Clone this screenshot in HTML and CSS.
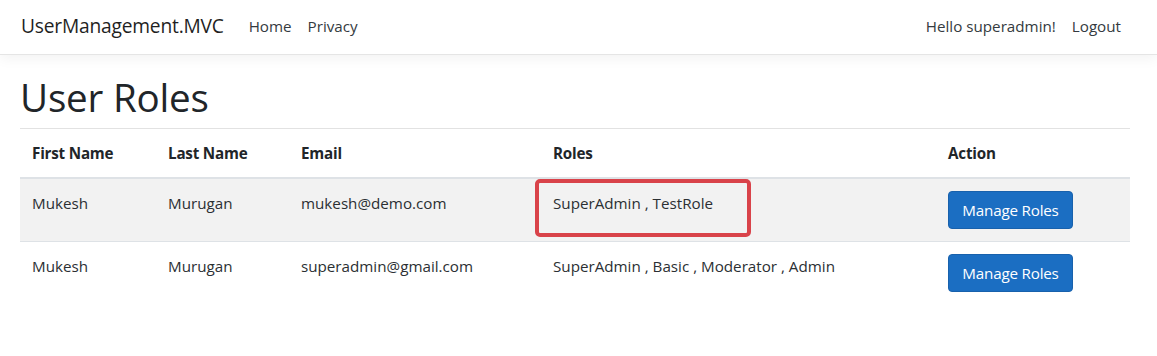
FILE: index.html
```html
<!DOCTYPE html>
<html>
<head>
<meta charset="utf-8">
<link rel="stylesheet" href="styles.css">
</head>
<body>
<header class="navbar">
  <div class="nav-left">
    <span class="brand">UserManagement.MVC</span>
    <a class="nav-link">Home</a>
    <a class="nav-link">Privacy</a>
  </div>
  <div class="nav-right">
    <a class="nav-link">Hello superadmin!</a>
    <a class="nav-link">Logout</a>
  </div>
</header>
<main class="content">
  <h1 class="title">User Roles</h1>
  <table class="table">
    <thead>
      <tr>
        <th class="c1">First Name</th>
        <th class="c2">Last Name</th>
        <th class="c3">Email</th>
        <th class="c4">Roles</th>
        <th class="c5">Action</th>
      </tr>
    </thead>
    <tbody>
      <tr class="striped">
        <td>Mukesh</td>
        <td>Murugan</td>
        <td>mukesh@demo.com</td>
        <td class="roles-cell"><span class="highlight"></span>SuperAdmin , TestRole</td>
        <td><a class="btn">Manage Roles</a></td>
      </tr>
      <tr>
        <td>Mukesh</td>
        <td>Murugan</td>
        <td>superadmin@gmail.com</td>
        <td>SuperAdmin , Basic , Moderator , Admin</td>
        <td><a class="btn">Manage Roles</a></td>
      </tr>
    </tbody>
  </table>
</main>
</body>
</html>
```
FILE: styles.css
```css
* { box-sizing: border-box; }
html, body { margin: 0; padding: 0; background: #fff; }
body {
  font-family: "Open Sans", "Noto Sans", sans-serif;
  font-size: 15px;
  color: #212529;
  line-height: 1.5;
}
.navbar {
  height: 55px;
  display: flex;
  justify-content: space-between;
  align-items: center;
  padding: 0 36px 2px 21px;
  border-bottom: 1px solid #e5e5e5;
  box-shadow: 0 4px 12px rgba(0,0,0,0.05);
}
.nav-left, .nav-right { display: flex; align-items: center; }
.brand {
  font-size: 19.2px;
  color: #1f1f1f;
  margin-right: 17px;
  letter-spacing: -0.2px;
}
.nav-link {
  color: #343a40;
  font-size: 15.2px;
  padding: 0 8px;
}
.nav-right .nav-link:last-child { padding-right: 0; }
.content {
  padding: 0 27px 0 20px;
}
.title {
  font-size: 38.6px;
  font-weight: 500;
  line-height: 46px;
  margin: 19px 0 0 0;
  padding-bottom: 8px;
  border-bottom: 1px solid #e2e2e2;
  color: #212529;
  letter-spacing: -0.2px;
}
.table {
  width: 1110px;
  border-collapse: collapse;
}
.table th, .table td {
  text-align: left;
  padding: 12px;
  vertical-align: top;
  font-size: 15.2px;
}
.table th {
  font-weight: 700;
  line-height: 24px;
  border-bottom: 2px solid #dee2e6;
  letter-spacing: -0.2px;
}
.table td {
  line-height: 24px;
  border-top: 1px solid #dee2e6;
  color: #2b2f33;
}
.c1 { width: 136px; }
.c2 { width: 133px; }
.c3 { width: 252px; }
.c4 { width: 395px; }
.striped td { background: #f2f2f2; }
.roles-cell { position: relative; }
.highlight {
  position: absolute;
  left: -6px;
  top: 0;
  width: 216px;
  height: 58px;
  border: 4px solid #d9434a;
  border-radius: 5px;
}
.btn {
  display: inline-block;
  background: #1b6ec2;
  border: 1px solid #1861ac;
  color: #fff;
  border-radius: 4px;
  padding: 6px 10px;
  line-height: 24px;
  font-size: 15.2px;
  width: 125px;
  text-align: center;
  letter-spacing: -0.2px;
}
```
